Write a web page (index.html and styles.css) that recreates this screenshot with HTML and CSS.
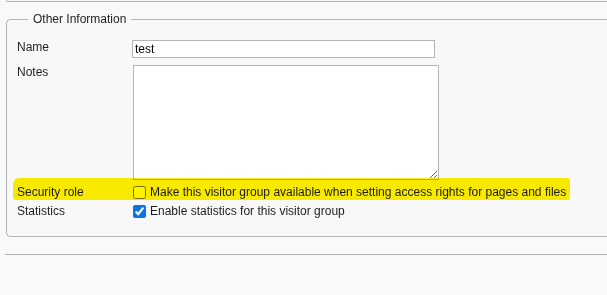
FILE: index.html
```html
<!DOCTYPE html>
<html lang="en">
<head>
<meta charset="UTF-8">
<title>Visitor group</title>
<link rel="stylesheet" href="styles.css">
</head>
<body>
	<div class="prev"></div>
	<fieldset class="group">
		<legend>Other Information</legend>
		<div class="row row-top">
			<label class="lbl" for="name">Name</label>
			<input class="text" id="name" type="text" value="test">
		</div>
		<div class="row row-top">
			<label class="lbl" for="notes">Notes</label>
			<textarea class="notes" id="notes"></textarea>
		</div>
		<div class="row row-check marked">
			<span class="lbl">Security role</span>
			<label class="check"><input type="checkbox"> Make this visitor group available when setting access rights for pages and files</label>
		</div>
		<div class="row row-check">
			<span class="lbl">Statistics</span>
			<label class="check"><input type="checkbox" checked> Enable statistics for this visitor group</label>
		</div>
	</fieldset>
	<div class="rule"></div>
</body>
</html>
```

FILE: styles.css
```css
html, body {margin: 0;padding: 0;background-color: #f9f9f9;overflow: hidden;}
body {font-family: "Liberation Sans", Arial, sans-serif;font-size: 12px;color: #1e1e1e;}

.prev {height: 1px;margin-left: 6px;width: 640px;border-left: 1px solid #b4b4b4;border-bottom: 1px solid #b4b4b4;border-bottom-left-radius: 4px;}

.group {width: 640px;margin: 10px 0 0 6px;padding: 13px 10px 17px 10px;border: 1px solid #b4b4b4;border-radius: 4px;background-color: #f8f8f8;}
.group legend {margin-left: 11px;padding: 0 5px;line-height: 15px;color: #1e1e1e;}

.row {display: flex;align-items: center;margin-bottom: 7px;}
.row-top {align-items: flex-start;}
.row-top + .row-check {margin-top: -2px;}
.row-check {margin-bottom: 4px;height: 15px;}
.row:last-child {margin-bottom: 0;}
.lbl {width: 116px;flex: none;line-height: 15px;}

.text {width: 303px;height: 18px;box-sizing: border-box;margin: 0 0 0 -1px;padding: 0 2px;border: 1px solid #b4b4b4;background-color: #fff;font-family: inherit;font-size: 12px;color: #000;outline: none;}
.notes {width: 306px;height: 115px;box-sizing: border-box;margin: 0;padding: 2px;border: 1px solid #b4b4b4;background-color: #fff;resize: both;font-family: inherit;}

.check {display: flex;align-items: center;gap: 4px;line-height: 15px;white-space: nowrap;}
.check input {width: 13px;height: 13px;margin: 0;accent-color: #0b75e6;}

.marked {position: relative;width: fit-content;padding-right: 2px;}
.marked::after {content: "";position: absolute;left: -4px;right: -2px;top: -7px;bottom: 0;background-color: #fff000;mix-blend-mode: multiply;border-radius: 6px 2px 2px 3px;pointer-events: none;}

.rule {width: 620px;margin: 17px 0 0 5px;border-top: 1px solid #b4b4b4;}
```
